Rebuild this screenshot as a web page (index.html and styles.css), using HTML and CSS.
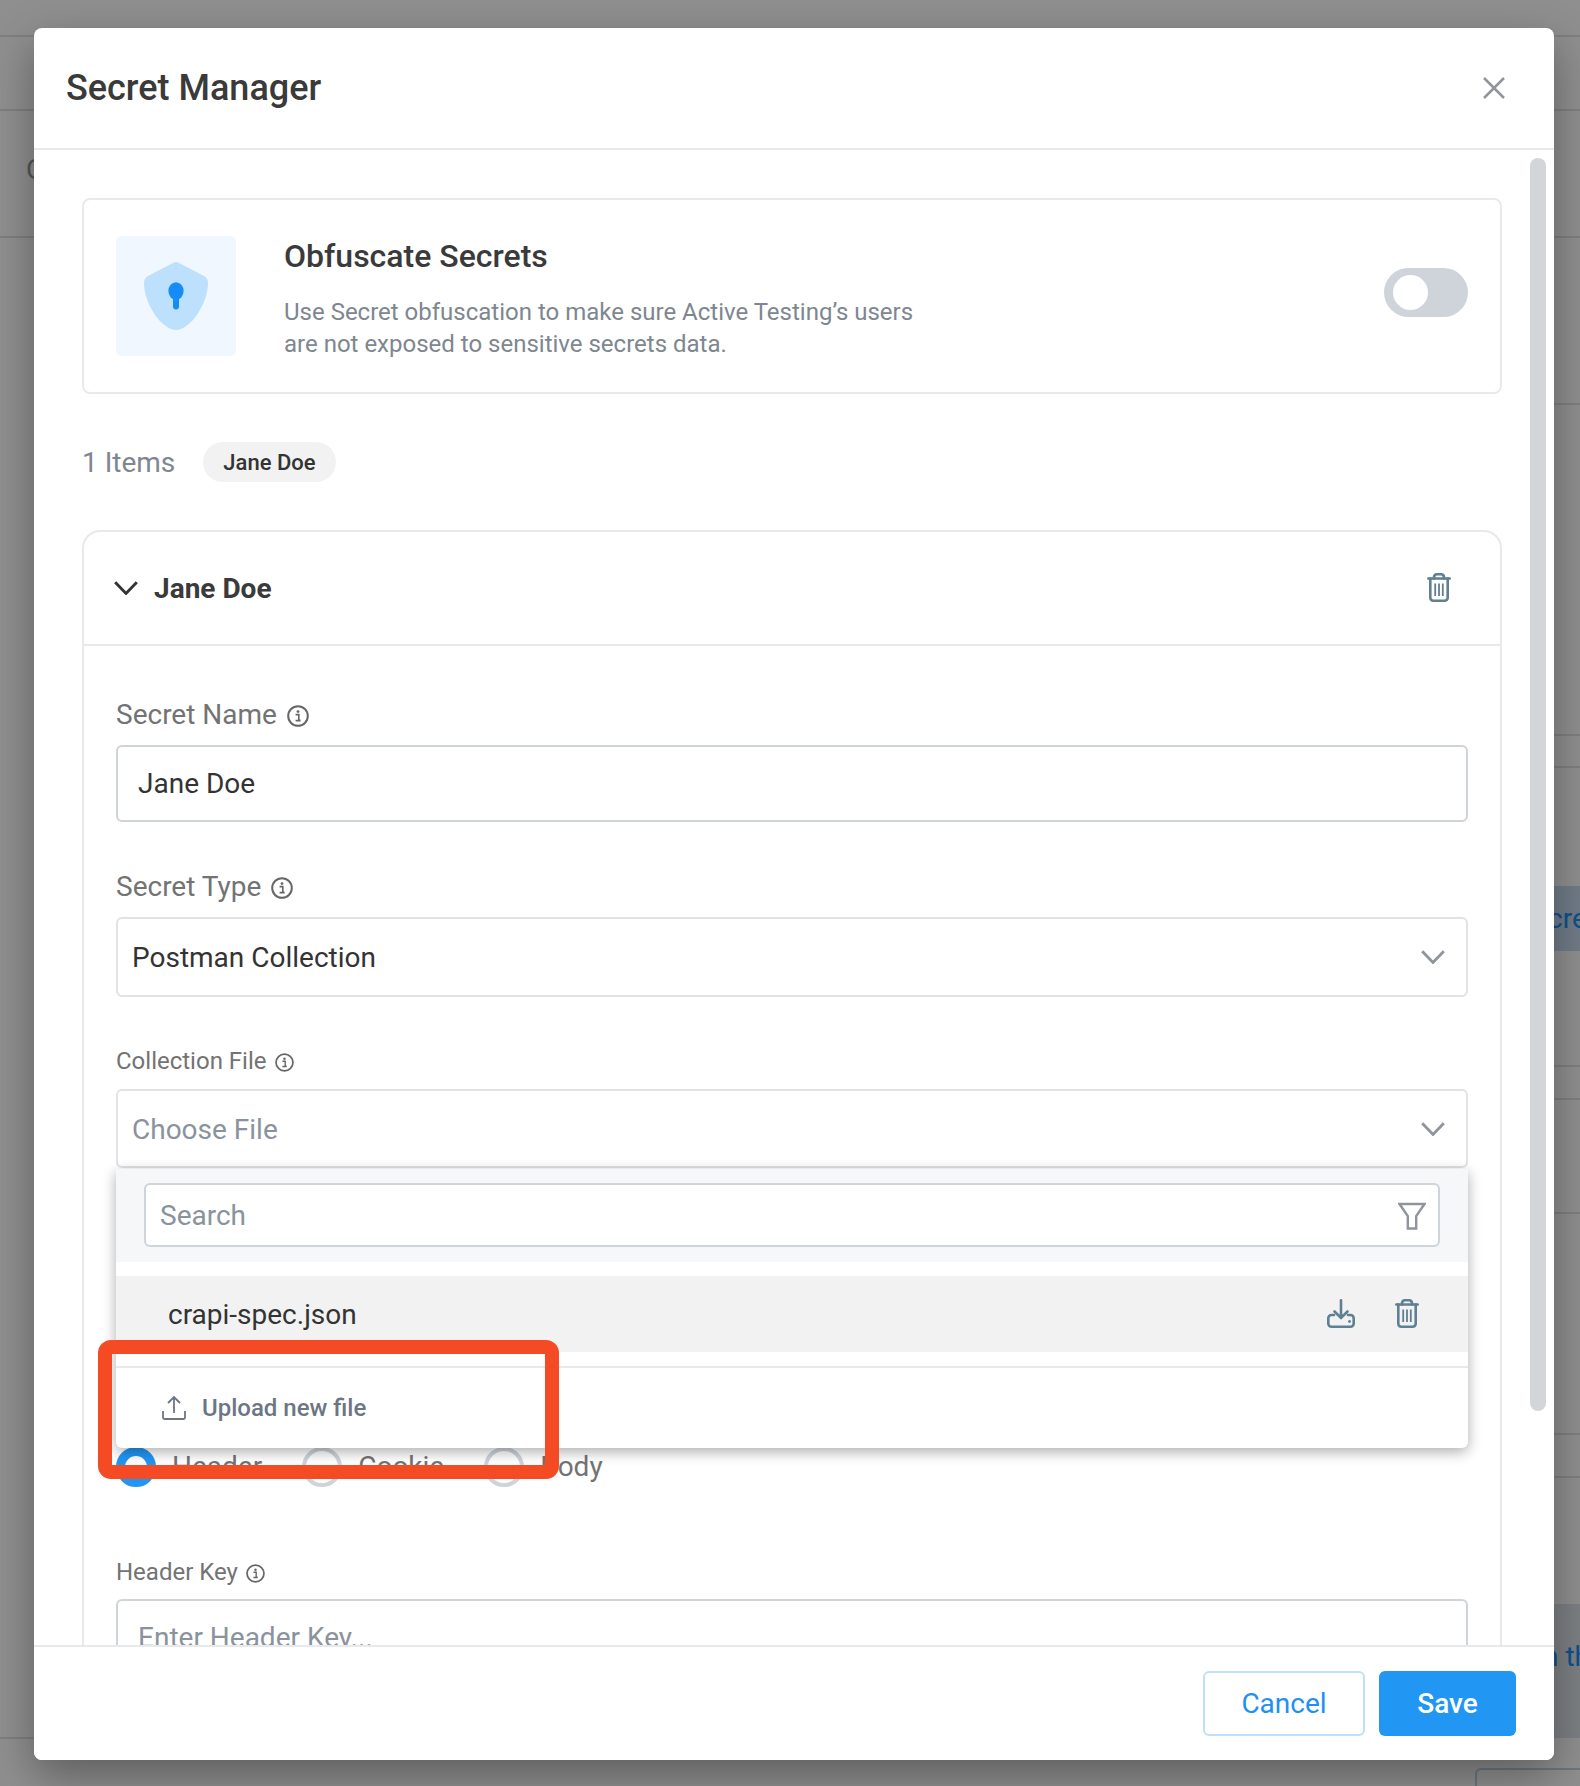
FILE: index.html
```html
<!DOCTYPE html>
<html lang="en">
<head>
<meta charset="utf-8">
<title>Secret Manager</title>
<link rel="stylesheet" href="styles.css">
</head>
<body>
<svg class="defs" width="0" height="0" aria-hidden="true">
  <symbol id="i-info" viewBox="0 0 22 22">
    <circle cx="11" cy="11" r="9.8" fill="none" stroke="currentColor" stroke-width="2"/>
    <circle cx="11" cy="6.6" r="1.4" fill="currentColor"/>
    <path d="M8.6 9.6H11.8V15.2H13.4M8.6 15.6H13.6" fill="none" stroke="currentColor" stroke-width="1.6"/>
  </symbol>
  <symbol id="i-trash" viewBox="0 0 24 29">
    <g fill="none" stroke="currentColor" stroke-width="2.6" stroke-linecap="round">
      <path d="M1.300 5.500H22.700"/>
      <path d="M7 5.500V4A3 3 0 0 1 10 1.300H14A3 3 0 0 1 17 4V5.500"/>
      <path d="M3.300 5.500V24.500A3 3 0 0 0 6.300 27.700H17.700A3 3 0 0 0 20.700 24.500V5.500"/>
    </g>
    <path d="M8.200 10.500V23M12 10.500V23M15.800 10.500V23" fill="none" stroke="currentColor" stroke-width="1.800"/>
  </symbol>
  <symbol id="i-chev" viewBox="0 0 24 14">
    <path d="M1.200 1.200L12 12.400L22.800 1.200" fill="none" stroke="currentColor" stroke-width="2.900"/>
  </symbol>
</svg>

<div class="backdrop">
  <div class="bg-left">
    <div class="bg-row h37"></div>
    <div class="bg-row h74"></div>
    <div class="bg-row h127"><span class="bg-letter">C</span></div>
    <div class="bg-row h1501"></div>
  </div>
  <div class="bg-right">
    <div class="bg-row h37"></div>
    <div class="bg-row h74"></div>
    <div class="bg-row h127"></div>
    <div class="bg-row h167"></div>
    <div class="bg-row h331"></div>
    <div class="bg-row h32"></div>
    <div class="bg-plain h118"></div>
    <div class="bg-blue h65"><span>cre</span></div>
    <div class="bg-row h116"></div>
    <div class="bg-row h33"></div>
    <div class="bg-row h114"></div>
    <div class="bg-row h221"></div>
    <div class="bg-row h43"></div>
    <div class="bg-plain h126"></div>
    <div class="bg-blue h134 shift"><span>n th</span></div>
    <div class="bg-input"></div>
  </div>
</div>

<div class="overlay">
  <div class="modal">
    <header class="modal-head">
      <h1 class="modal-title">Secret Manager</h1>
      <svg class="close-icon" width="22" height="22" viewBox="0 0 22 22"><path d="M1 1L21 21M21 1L1 21" fill="none" stroke="currentColor" stroke-width="2.500"/></svg>
    </header>

    <div class="modal-body">
      <section class="obfuscate">
        <div class="shield-box">
          <svg width="64" height="68" viewBox="0 0 64 68">
            <path d="M32 0Q33.500 0 35 1L60 14Q64 16 64 21C64 42 46 68 32 68C18 68 0 42 0 21Q0 16 4 14L29 1Q30.500 0 32 0Z" fill="#bde0fd"/>
            <ellipse cx="32" cy="29" rx="7.600" ry="8.800" fill="#168cf6"/>
            <rect x="29" y="30" width="6" height="17.500" rx="3" fill="#168cf6"/>
          </svg>
        </div>
        <div class="obf-text">
          <h2 class="obf-title">Obfuscate Secrets</h2>
          <p class="obf-desc">Use Secret obfuscation to make sure Active Testing’s users<br>are not exposed to sensitive secrets data.</p>
        </div>
        <div class="toggle"><span class="toggle-knob"></span></div>
      </section>

      <div class="items-row">
        <span class="items-count">1 Items</span>
        <span class="chip">Jane Doe</span>
      </div>

      <section class="secret-card">
        <div class="secret-head">
          <svg class="secret-chev" width="24" height="14"><use href="#i-chev"/></svg>
          <span class="secret-name">Jane Doe</span>
          <svg class="icon-trash head-trash" width="24" height="29"><use href="#i-trash"/></svg>
        </div>
        <div class="secret-form">
          <label class="label">Secret Name <svg class="info" width="22" height="22"><use href="#i-info"/></svg></label>
          <div class="input">Jane Doe</div>

          <label class="label gap-top">Secret Type <svg class="info" width="22" height="22"><use href="#i-info"/></svg></label>
          <div class="select select-type"><span>Postman Collection</span><svg class="sel-chev" width="24" height="14"><use href="#i-chev"/></svg></div>

          <label class="label small gap-top-file">Collection File <svg class="info" width="19" height="19"><use href="#i-info"/></svg></label>
          <div class="file-wrap">
            <div class="select select-file"><span class="muted">Choose File</span><svg class="sel-chev" width="24" height="14"><use href="#i-chev"/></svg></div>
            <div class="dropdown">
              <div class="dd-search">
                <div class="dd-input"><span class="muted">Search</span>
                  <svg class="filter" width="28" height="28" viewBox="0 0 28 28"><path d="M1.500 2H26.500L18.200 14V26.500H9.800V14Z" fill="none" stroke="currentColor" stroke-width="2.400"/></svg>
                </div>
              </div>
              <div class="dd-item">
                <span class="dd-file">crapi-spec.json</span>
                <svg class="icon-trash" width="28" height="29" viewBox="0 0 28 29">
                  <g fill="none" stroke="currentColor" stroke-width="2.600" stroke-linecap="round">
                    <path d="M14 1.300V19M7.500 12.500L14 19L20.500 12.500"/>
                    <path d="M7 16H4.500A3.200 3.200 0 0 0 1.300 19.200V24.500A3.200 3.200 0 0 0 4.500 27.700H23.500A3.200 3.200 0 0 0 26.700 24.500V19.200A3.200 3.200 0 0 0 23.500 16H21"/>
                  </g>
                  <circle cx="22.500" cy="22.500" r="1.400" fill="currentColor"/>
                </svg>
                <svg class="icon-trash" width="24" height="29"><use href="#i-trash"/></svg>
              </div>
              <div class="dd-foot">
                <svg class="upload" width="24" height="24" viewBox="0 0 24 24"><path d="M12 1V17M6 7L12 1L18 7M1 15V21.500A1.500 1.500 0 0 0 2.500 23H21.500A1.500 1.500 0 0 0 23 21.500V15" fill="none" stroke="currentColor" stroke-width="1.800"/></svg>
                <span class="upload-text">Upload new file</span>
              </div>
            </div>
          </div>

          <div class="radios">
            <span class="radio on"></span><span class="radio-label">Header</span>
            <span class="radio"></span><span class="radio-label">Cookie</span>
            <span class="radio"></span><span class="radio-label">Body</span>
          </div>

          <label class="label small gap-top-key">Header Key <svg class="info" width="19" height="19"><use href="#i-info"/></svg></label>
          <div class="input"><span class="muted">Enter Header Key...</span></div>
        </div>
      </section>
    </div>

    <footer class="modal-foot">
      <button class="btn btn-ghost" type="button">Cancel</button>
      <button class="btn btn-primary" type="button">Save</button>
    </footer>

    <div class="scrollbar"></div>
    <div class="annotation"></div>
  </div>
</div>
</body>
</html>
```

FILE: styles.css
```css
* { box-sizing: border-box; }
html, body { margin: 0; padding: 0; }
body {
  width: 1580px;
  height: 1786px;
  position: relative;
  overflow: hidden;
  font-family: Roboto, "Liberation Sans", sans-serif;
  color: #333;
  background: #fff;
}
.defs { position: absolute; }

/* page behind the modal */
.backdrop { display: flex; justify-content: space-between; height: 100%; }
.bg-left { width: 60px; }
.bg-right { width: 105px; position: relative; }
.bg-row { border-bottom: 2px solid #e2e2e2; overflow: hidden; }
.bg-plain { border: 0; }
.h37 { height: 37px; } .h74 { height: 74px; } .h127 { height: 127px; }
.h167 { height: 167px; } .h331 { height: 331px; } .h32 { height: 32px; }
.h118 { height: 118px; }
.h65 { height: 65px; } .h116 { height: 116px; } .h33 { height: 33px; }
.h114 { height: 114px; } .h221 { height: 221px; } .h43 { height: 43px; }
.h126 { height: 126px; } .h134 { height: 134px; } .h1501 { height: 1501px; }
.bg-letter { display: block; margin: 43px 0 0 26px; font-size: 28px; line-height: 32px; color: #9a9a9a; }
.bg-blue {
  background: #cadef3;
  color: #1b90f5;
  font-size: 28px;
  line-height: 65px;
  padding-left: 73px;
  white-space: nowrap;
  overflow: hidden;
}
.bg-blue.shift { line-height: 40px; padding-top: 33px; padding-left: 68px; background: #dde5ec; }
.bg-input {
  position: absolute;
  left: 0;
  top: 1768px;
  width: 120px;
  height: 40px;
  border: 2px solid #bcd4ec;
  border-radius: 6px;
}
.overlay {
  position: absolute;
  inset: 0;
  background: rgba(0, 0, 0, .44);
  padding: 28px 26px 26px 34px;
}

/* modal */
.modal {
  position: relative;
  width: 1520px;
  height: 1732px;
  background: #fff;
  border-radius: 8px;
  box-shadow: 0 16px 44px rgba(0, 0, 0, .34);
  display: flex;
  flex-direction: column;
}
.modal-head {
  flex: none;
  height: 122px;
  border-bottom: 2px solid #e8e9eb;
  display: flex;
  align-items: center;
  justify-content: space-between;
  padding: 0 49px 0 32px;
}
.modal-title { margin: 0; font-size: 36px; line-height: 40px; font-weight: 500; color: #3a3a3a; }
.close-icon { color: #8f959c; }
.modal-body { flex: 1; min-height: 0; overflow: hidden; padding: 48px 52px 0 48px; }

.obfuscate {
  height: 196px;
  border: 2px solid #e8e9eb;
  border-radius: 8px;
  display: flex;
  align-items: flex-start;
  padding: 36px 32px 0 32px;
}
.shield-box {
  flex: none;
  width: 120px;
  height: 120px;
  background: #f0f7fe;
  border-radius: 6px;
  display: flex;
  align-items: center;
  justify-content: center;
}
.obf-text { flex: 1; padding: 0 0 0 48px; }
.obf-title { margin: 0; font-size: 32px; line-height: 40px; font-weight: 500; color: #3a3a3a; }
.obf-desc { margin: 20px 0 0; font-size: 24px; line-height: 32px; color: #7e8690; }
.toggle {
  flex: none;
  width: 84px;
  height: 49px;
  margin-top: 32px;
  background: #cfd4db;
  border-radius: 25px;
  padding: 7px 9px;
}
.toggle-knob { display: block; width: 35px; height: 35px; background: #fff; border-radius: 50%; }

.items-row { display: flex; align-items: center; height: 40px; margin-top: 48px; }
.items-count { font-size: 28px; color: #7e8690; }
.chip {
  margin-left: 28px;
  height: 40px;
  padding: 0 20px;
  display: flex;
  align-items: center;
  background: #f2f2f2;
  border-radius: 20px;
  font-size: 22px;
  font-weight: 500;
  color: #333;
}

.secret-card {
  margin-top: 48px;
  height: 1400px;
  border: 2px solid #e8e9eb;
  border-radius: 18px;
}
.secret-head {
  height: 114px;
  border-bottom: 2px solid #e8e9eb;
  display: flex;
  align-items: center;
  padding: 0 49px 0 30px;
}
.secret-chev { color: #333; }
.secret-name { flex: 1; margin-left: 16px; font-size: 28px; font-weight: 700; color: #3a3a3a; }
.icon-trash { color: #5f7f92; flex: none; }
.head-trash { margin-top: -1px; }
.secret-form { padding: 53px 32px 0 32px; }

.label { display: flex; align-items: center; height: 32px; font-size: 28px; color: #737373; margin-bottom: 14px; padding-bottom: 2px; }
.label.small { height: 28px; font-size: 24px; padding-bottom: 0; }
.info { color: #666; margin-left: 10px; margin-top: 2px; flex: none; }
.label .info { position: relative; top: 1px; }
.label.small .info { margin-left: 8px; top: 0; }
.gap-top { margin-top: 49px; }
.gap-top-file { margin-top: 50px; }
.gap-top-key { margin-top: 71px; margin-bottom: 13px; }

.input {
  height: 77px;
  border: 2px solid #ced4da;
  border-radius: 6px;
  padding: 0 20px;
  display: flex;
  align-items: center;
  font-size: 28px;
  color: #333;
}
.muted { color: #8a939d; }
.select {
  display: flex;
  align-items: center;
  justify-content: space-between;
  border: 2px solid #e0e2e6;
  border-radius: 6px;
  padding: 0 21px 0 14px;
  font-size: 28px;
  color: #333;
}
.select-type { height: 80px; }
.select-file { height: 79px; }
.select-file .muted { padding-top: 2px; }
.sel-chev { color: #8f959c; }

.file-wrap { position: relative; }
.dropdown {
  position: absolute;
  left: 0;
  right: 0;
  top: 80px;
  height: 279px;
  background: #fff;
  border-radius: 0 0 6px 6px;
  box-shadow: 0 4px 14px rgba(0, 0, 0, .32);
  z-index: 2;
}
.dd-search { height: 93px; background: #f6f7f9; padding: 14px 28px 0 28px; }
.dd-input {
  height: 64px;
  background: #fff;
  border: 2px solid #ced4da;
  border-radius: 6px;
  display: flex;
  align-items: center;
  justify-content: space-between;
  padding: 0 12px 0 14px;
  font-size: 28px;
}
.filter { color: #8f959c; margin-top: 2px; }
.dd-item {
  margin-top: 14px;
  height: 76px;
  background: #f2f2f3;
  display: flex;
  align-items: center;
  padding: 0 49px 0 52px;
  gap: 40px;
}
.dd-item .icon-trash { margin-top: -2px; }
.dd-file { flex: 1; font-size: 28px; color: #333; }
.dd-foot {
  margin-top: 14px;
  height: 82px;
  border-top: 2px solid #e8e9eb;
  display: flex;
  align-items: center;
  padding: 0 0 0 46px;
}
.upload { color: #6c7683; }
.upload-text { margin-left: 16px; font-size: 24px; font-weight: 500; color: #6c7683; }

.radios { display: flex; align-items: center; height: 40px; margin-top: 279px; font-size: 28px; color: #737373; }
.radio { flex: none; width: 40px; height: 40px; border: 4px solid #ced4da; border-radius: 50%; }
.radio.on { border: 9px solid #2196f3; }
.radio-label { margin: -2px 40px 0 16px; }

/* footer */
.modal-foot {
  flex: none;
  height: 115px;
  background: #fff;
  border-top: 2px solid #e8e9eb;
  border-radius: 0 0 8px 8px;
  display: flex;
  align-items: center;
  justify-content: flex-end;
  gap: 14px;
  padding: 0 38px 0 0;
}
.btn { height: 65px; border-radius: 6px; font-family: inherit; font-size: 28px; padding: 0; }
.btn-ghost { width: 162px; background: #fff; border: 2px solid #bfe0fb; color: #1f90f5; }
.btn-primary { width: 137px; background: #2196f3; border: 0; color: #fff; font-weight: 500; }

.scrollbar {
  position: absolute;
  left: 1496px;
  top: 130px;
  width: 16px;
  height: 1253px;
  background: #d3d5d9;
  border-radius: 8px;
}
.annotation {
  position: absolute;
  left: 64px;
  top: 1312px;
  width: 461px;
  height: 139px;
  border: 14px solid #f54b25;
  border-radius: 13px;
  z-index: 3;
}
```
